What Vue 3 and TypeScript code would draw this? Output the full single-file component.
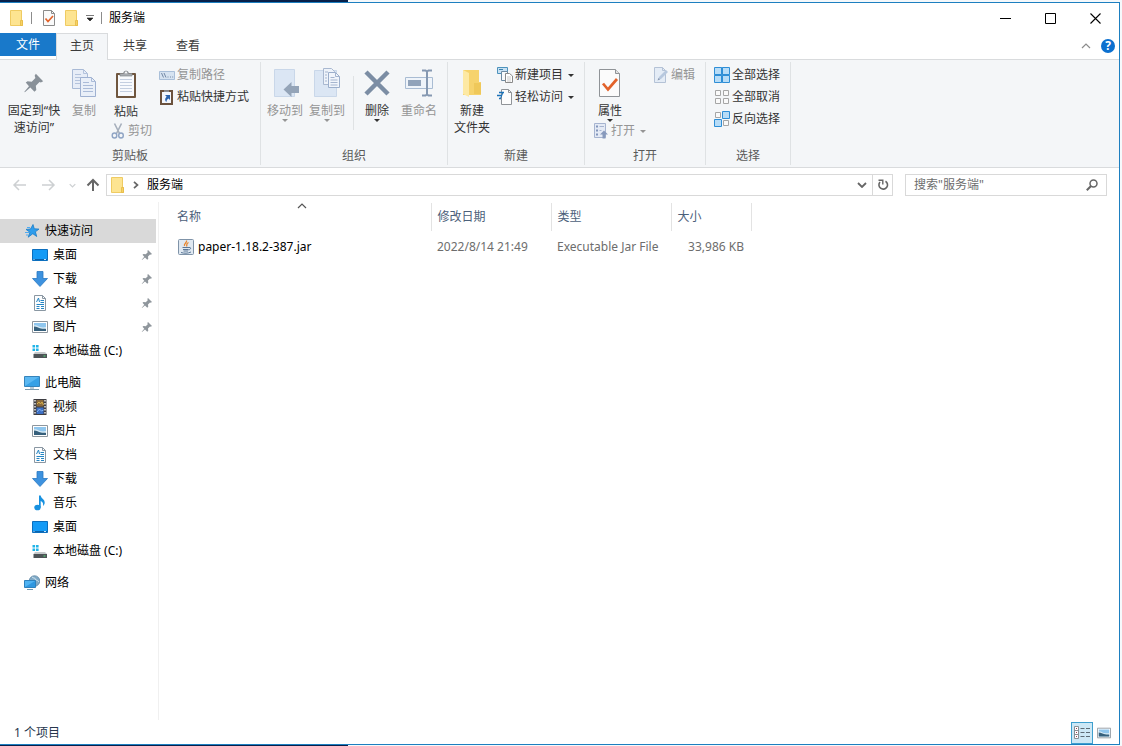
<script setup lang="ts">
import { ref } from 'vue'

interface Place {
  label: string
  icon: string
  root?: boolean
  pinned?: boolean
}

interface FileRow {
  name: string
  modified: string
  type: string
  size: string
}

const groups: Place[][] = [
  [
    { label: '快速访问', icon: 'star', root: true },
    { label: '桌面', icon: 'desktop', pinned: true },
    { label: '下载', icon: 'download', pinned: true },
    { label: '文档', icon: 'document', pinned: true },
    { label: '图片', icon: 'picture', pinned: true },
    { label: '本地磁盘 (C:)', icon: 'drive' },
  ],
  [
    { label: '此电脑', icon: 'computer', root: true },
    { label: '视频', icon: 'video' },
    { label: '图片', icon: 'picture' },
    { label: '文档', icon: 'document' },
    { label: '下载', icon: 'download' },
    { label: '音乐', icon: 'music' },
    { label: '桌面', icon: 'desktop' },
    { label: '本地磁盘 (C:)', icon: 'drive' },
  ],
  [{ label: '网络', icon: 'network', root: true }],
]

const files: FileRow[] = [
  { name: 'paper-1.18.2-387.jar', modified: '2022/8/14 21:49', type: 'Executable Jar File', size: '33,986 KB' },
]

const tabs: string[] = ['主页', '共享', '查看']
const activeTab = ref('主页')
const selected = ref('0-0')
const query = ref('')
</script>

<template>
  <svg class="sprite" aria-hidden="true">
    <symbol id="folder" viewBox="0 0 16 16">
      <path d="M1.500.5h11v10h1v5h-12z" fill="#fde491" stroke="#efcb62" />
      <path d="M11.500 15v-4.500h2V15.500h-2z" fill="#f7d365" stroke="#e5b945" stroke-width=".8" />
    </symbol>
    <symbol id="doc-check" viewBox="0 0 16 16">
      <path d="M2.500.5h8l3 3v12h-11z" fill="#fafafa" stroke="#8b8b8b" />
      <path d="M10.500.5v3h3" fill="none" stroke="#8b8b8b" />
      <path d="M4.500 8.500l2.500 3 5-5.500" fill="none" stroke="#e2622a" stroke-width="1.700" />
    </symbol>
    <symbol id="caret" viewBox="0 0 6 3"><path d="M0 0h6L3 3z" fill="currentColor" /></symbol>
    <symbol id="pin" viewBox="0 0 24 24">
      <path d="M14 2l8 8-2.500 1.500-1.500-.5-4 4 .5 4.500-2 2L8 17l-6 5-.5-.5L6.500 15.500 3 11.500l2-1.500 4.500.5 4-4-.8-2.500z" fill="currentColor" />
    </symbol>
    <symbol id="copy" viewBox="0 0 26 30">
      <path d="M1.500 1.500h11l4 4v15h-15z" fill="#e7edf7" stroke="#a9bad6" />
      <path d="M12.500 1.500v4h4M4 6.500h6M4 9.500h10M4 12.500h6M4 15.500h6" fill="none" stroke="#b4c3dc" />
      <path d="M9.500 9.500h11l4 4v15h-15z" fill="#e9eff8" stroke="#9fb1d1" />
      <path d="M20.500 9.500v4h4M12 14.500h6M12 17.500h10M12 20.500h10M12 23.500h10" fill="none" stroke="#aabbd8" />
    </symbol>
    <symbol id="paste" viewBox="0 0 22 30">
      <rect x="1" y="4" width="20" height="25" rx="1" fill="#6f563f" />
      <rect x="3" y="6" width="16" height="21" fill="#f8fafd" />
      <path d="M5 10.500h12M5 13.500h12M5 16.500h12M5 19.500h12M5 22.500h12" stroke="#c4cfe0" />
      <path d="M5 7V4.500h3.500a2.500 2.500 0 0 1 5 0H17V7z" fill="#a7abb0" stroke="#85898e" stroke-width=".7" />
      <circle cx="11" cy="3.500" r="1" fill="#fff" />
    </symbol>
    <symbol id="cut" viewBox="0 0 16 16">
      <path d="M4.500.5l5 10M11.500.5l-5 10" stroke="#a5aebb" stroke-width="1.600" />
      <ellipse cx="4.500" cy="12.500" rx="2.300" ry="2.500" fill="none" stroke="#8fa4c4" stroke-width="1.400" />
      <ellipse cx="11" cy="12.500" rx="2.300" ry="2.500" fill="none" stroke="#8fa4c4" stroke-width="1.400" />
    </symbol>
    <symbol id="path" viewBox="0 0 16 16">
      <path d="M.5 4.500h15v8H.500z" fill="#d6e3f1" stroke="#a9bfd9" />
      <path d="M2.500 6l2 4.500M5 6l2 4.500" stroke="#7389a6" />
      <path d="M8.500 10h1M11 10h1M13.200 10h1" stroke="#7389a6" />
    </symbol>
    <symbol id="shortcut" viewBox="0 0 16 16">
      <rect x="2" y="2" width="11" height="13" fill="#f3f7fd" stroke="#6b523d" stroke-width="2" />
      <path d="M5 3V1.200h5V3z" fill="#8c9095" />
      <path d="M6 6h5v5L9.500 9.500C8 10.500 7.500 11.500 7.500 13 5.500 11.500 6 9 7.700 7.700z" fill="#2a63ad" />
    </symbol>
    <symbol id="move-to" viewBox="0 0 28 30">
      <path d="M3.500 1.500h20v27h-20z" fill="#dbe6f4" stroke="#c9d7e9" />
      <path d="M12.500 21.500l8-7.500v4h7.500v7h-7.500v4z" fill="#94a4b8" />
    </symbol>
    <symbol id="copy-to" viewBox="0 0 28 30">
      <path d="M1.500 2.500h22v26h-22z" fill="#dbe6f4" stroke="#c9d7e9" />
      <path d="M10.500.5h8l3 3v13h-11z" fill="#eef3fa" stroke="#a9b8d0" />
      <path d="M15.500 4.500h7l4 4v11h-11z" fill="#f1f5fb" stroke="#9baecb" />
      <path d="M22.500 4.500v4h4M17.500 9.500h4M17.500 12h7M17.500 14.500h7M17.500 17h7M12 4h3M12 7h2M12 10h2M12 13h2" fill="none" stroke="#a5b5cf" />
    </symbol>
    <symbol id="delete" viewBox="0 0 28 28">
      <path d="M3 3l22 22M25 3L3 25" stroke="#7b8da4" stroke-width="4.500" />
    </symbol>
    <symbol id="rename" viewBox="0 0 30 28">
      <path d="M1.500 8.500h27v11h-27z" fill="#eff4fa" stroke="#a9bcd3" />
      <path d="M4 11h13v6H4z" fill="#91a3ba" />
      <path d="M18 1.500h3.500l1.500 1 1.500-1H28M18 26.500h3.500l1.500-1 1.500 1H28M23 2.500v23" fill="none" stroke="#8598b1" stroke-width="2" />
    </symbol>
    <symbol id="new-folder" viewBox="0 0 22 30">
      <path d="M2 2h16v12h2v13H2z" fill="#f6d36d" />
      <path d="M2 2l6 3v24l-6-3z" fill="#fde9a4" />
      <path d="M13 15h7v11h-7z" fill="#efc85a" />
    </symbol>
    <symbol id="new-item" viewBox="0 0 16 16">
      <path d="M.5.5h10v6H.500z" fill="#c8e1f3" stroke="#4d93bd" />
      <path d="M2 2.500h4" stroke="#3d83ae" />
      <path d="M4.500 4.500h6v9h-6z" fill="#f8fafc" stroke="#6e8aa2" />
      <path d="M8.500 6.500h4l3 2.500v6.500h-7z" fill="#fff" stroke="#8a8a8a" />
      <path d="M10 10h4M10 12h4M10 14h4" stroke="#bbb" stroke-width=".8" />
    </symbol>
    <symbol id="easy" viewBox="0 0 16 16">
      <path d="M4.500.5h7l3 3v12h-10z" fill="#fdfdfd" stroke="#909498" />
      <path d="M11.500.5v3h3" fill="none" stroke="#909498" />
      <path d="M2 3.500h5M0 6.500h5M2 9.500h2" stroke="#1b72b8" stroke-width="1.400" />
      <path d="M6 3.500L3.500 9.500" stroke="#1b72b8" />
    </symbol>
    <symbol id="properties" viewBox="0 0 24 30">
      <path d="M1.500 1.500h16l4 4v23h-20z" fill="#fbfbfb" stroke="#8f9397" />
      <path d="M17.500 1.500v4h4" fill="#e2e2e2" stroke="#8f9397" />
      <path d="M5 15.500l5 6 9-10.500" fill="none" stroke="#e2622a" stroke-width="2.700" />
    </symbol>
    <symbol id="open" viewBox="0 0 16 16">
      <path d="M1.500.5h11v14h-11z" fill="#e4eaf5" stroke="#a6b4d0" />
      <path d="M3 3.500h2M3 7.500h2M3 11.500h2" stroke="#8295bb" stroke-width="2" />
      <path d="M6.500 3.500H11M6.500 7.500h2" stroke="#a6b4d0" />
      <path d="M11 7.500l4 4h-2.500v4h-3v-4H7z" fill="#8799bc" />
    </symbol>
    <symbol id="edit" viewBox="0 0 16 16">
      <path d="M1.500.5h8l3 3v12h-11z" fill="#e4ecf6" stroke="#b4c2d6" />
      <path d="M9.500.5v3h3" fill="none" stroke="#b4c2d6" />
      <path d="M5 13l1-3L13 3l2 2-7 7z" fill="#b7c8de" />
      <path d="M4.500 13.500l1-2.500 1.500 1.500z" fill="#8999b1" />
    </symbol>
    <symbol id="select-all" viewBox="0 0 16 16">
      <path d="M.5.5h7v7h-7zM8.500.5h7v7h-7zM.5 8.500h7v7h-7zM8.500 8.500h7v7h-7z" fill="#b7dcf7" stroke="#2e8ed6" />
      <path d="M8 0v16M0 8h16" stroke="#2e8ed6" />
    </symbol>
    <symbol id="select-none" viewBox="0 0 16 16">
      <path d="M1.500 1.500h5v5h-5zM9.500 1.500h5v5h-5zM1.500 9.500h5v5h-5zM9.500 9.500h5v5h-5z" fill="#fafafa" stroke="#a6a6a6" />
    </symbol>
    <symbol id="select-invert" viewBox="0 0 16 16">
      <path d="M1.500 1.500h5v5h-5zM9.500 9.500h5v5h-5z" fill="#fafafa" stroke="#a6a6a6" />
      <path d="M8.500.5h7v7h-7zM.5 8.500h7v7h-7z" fill="#b7dcf7" stroke="#2e8ed6" />
    </symbol>
    <symbol id="arrow-left" viewBox="0 0 14 12"><path d="M14 6H2M7 1L2 6l5 5" fill="none" stroke="currentColor" stroke-width="1.500" /></symbol>
    <symbol id="arrow-right" viewBox="0 0 14 12"><path d="M0 6h12M7 1l5 5-5 5" fill="none" stroke="currentColor" stroke-width="1.500" /></symbol>
    <symbol id="arrow-up" viewBox="0 0 14 14"><path d="M7 13V2M1.500 7.500L7 2l5.500 5.500" fill="none" stroke="currentColor" stroke-width="2" /></symbol>
    <symbol id="chevron-down" viewBox="0 0 10 6"><path d="M1 1l4 4 4-4" fill="none" stroke="currentColor" stroke-width="1.800" /></symbol>
    <symbol id="chevron-up" viewBox="0 0 10 6"><path d="M1 5l4-4 4 4" fill="none" stroke="currentColor" stroke-width="1.200" /></symbol>
    <symbol id="chevron-right" viewBox="0 0 6 8"><path d="M1 .8L4.500 4 1 7.200" fill="none" stroke="currentColor" stroke-width="1.700" /></symbol>
    <symbol id="refresh" viewBox="0 0 12 12">
      <path d="M8.500 2.200A4.300 4.300 0 1 1 3 3" fill="none" stroke="currentColor" stroke-width="1.600" />
      <path d="M1.500 1.200h4.300v4.300" fill="none" stroke="currentColor" stroke-width="1.400" />
    </symbol>
    <symbol id="search" viewBox="0 0 12 12">
      <circle cx="7.500" cy="4.500" r="3.500" fill="none" stroke="currentColor" stroke-width="1.500" />
      <path d="M5 7L.8 11.200" stroke="currentColor" stroke-width="2" />
    </symbol>
    <symbol id="star" viewBox="0 0 16 16">
      <path d="M9 1.500l1.300 4.300 4.700.3-3.600 2.700 1.300 4.700-3.900-2.800-4.600 3.500 1.700-5L2 6.400l4.500-.4z" fill="#2f9dec" stroke="#1b7cc7" stroke-width=".8" />
      <path d="M1 9.500h4M2 12h2M3 4.500h3" stroke="#4faaf0" />
    </symbol>
    <symbol id="desktop" viewBox="0 0 16 16">
      <path d="M.5 2.500h15v11H.500z" fill="#159bf6" stroke="#0c6fbe" />
      <path d="M1 12.500h14" stroke="#0b62ab" />
      <path d="M1.500 12.500h1M12 12.500h2" stroke="#bfe3ff" />
    </symbol>
    <symbol id="download" viewBox="0 0 16 16"><path d="M5 .5h6v7h4.500L8 15.500.5 7.500H5z" fill="#3d92df" stroke="#2a78c1" stroke-width=".8" /></symbol>
    <symbol id="document" viewBox="0 0 16 16">
      <path d="M2.500.5h8l3 3v12h-11z" fill="#fcfdfe" stroke="#8a97a2" />
      <path d="M10.500.5v3h3" fill="none" stroke="#8a97a2" />
      <path d="M4.500 7l2-4 1 4M8.500 5.500H12M8.500 7.500H12M4.500 9.500H12M4.500 11.500h3M9 11.500h3M4.500 13.500h3M9 13.500h3" fill="none" stroke="#2585c3" />
    </symbol>
    <symbol id="picture" viewBox="0 0 16 16">
      <path d="M.5 2.500h15v11H.500z" fill="#fff" stroke="#8d969e" />
      <path d="M2 4h12v8H2z" fill="#8fc6ee" />
      <path d="M2 6.500c3-1 4 1 6 1.500s4 .5 6 0V12H2z" fill="#d9ebf5" />
      <path d="M2 7.500c3 0 4 1.500 7 2s4 0 5 .5v2H2z" fill="#36607c" />
    </symbol>
    <symbol id="drive" viewBox="0 0 16 16">
      <path d="M.5 2h2.600v2.600H.500zM4 2h2.600v2.600H4zM.5 5.500h2.600v2.600H.500zM4 5.500h2.600v2.600H4z" fill="#20b4e8" />
      <path d="M3 9h10l2 2H1.500z" fill="#c5c9cb" />
      <path d="M1.500 11H15v4H1.500z" fill="#4d5356" />
      <path d="M11.500 13h2" stroke="#55e07b" />
    </symbol>
    <symbol id="computer" viewBox="0 0 16 16">
      <path d="M.5 1.500h15v10H.500z" fill="#5bb8f2" stroke="#3684bb" />
      <path d="M1 11L15 2v9z" fill="#37a1e6" />
      <path d="M1 14.500h14" stroke="#7f9cae" />
      <path d="M6 12h4v2H6z" fill="#b9cad5" />
    </symbol>
    <symbol id="video" viewBox="0 0 16 16">
      <path d="M1.500 0h13v16h-13z" fill="#3d3d42" />
      <path d="M4.500 1h7v6.500h-7z" fill="#8a6a3d" />
      <path d="M4.500 8.500h7V15h-7z" fill="#3c6fc4" />
      <path d="M5 5l2-2 1.500 2L10 3l1.500 3" fill="none" stroke="#d8b24c" />
      <path d="M5 13l2.500-3 2 2 2-1" fill="none" stroke="#86b5f2" />
      <path d="M3 1v14M13 1v14" stroke="#f2f2f2" stroke-width="1.400" stroke-dasharray="1.500 1.500" />
    </symbol>
    <symbol id="music" viewBox="0 0 16 16">
      <ellipse cx="5.500" cy="12.500" rx="3.200" ry="2.800" fill="#1791e0" />
      <path d="M7 .5h1.700c.3 3 4.300 3.500 4 7.500-.2 1.500-1 2.300-1.700 3 .6-3-.5-4-2.300-5v6.500H7z" fill="#1791e0" />
    </symbol>
    <symbol id="network" viewBox="0 0 16 16">
      <circle cx="10.500" cy="6" r="5.300" fill="#7fa9c6" stroke="#56809f" stroke-width=".7" />
      <path d="M8 2c1 1.500 3 .5 3.500 2S9 6 8 7M12 5c2 0 2 2 3 1.500" fill="none" stroke="#cfe3ef" />
      <path d="M.5 5.500h11v7H.500z" fill="#4fb3f3" stroke="#2d81bd" />
      <path d="M1 12l10-6v6z" fill="#2f97e0" />
      <path d="M3 14.500h6" stroke="#6f98b3" />
    </symbol>
    <symbol id="jar" viewBox="0 0 16 16">
      <rect x=".5" y=".5" width="15" height="15" rx="1" fill="#dfe8f1" stroke="#7f93a8" />
      <path d="M8.500 1.500c1 2-3 3-2 5.500M10.500 3.500c-3 1.500-1 2-2 4" fill="none" stroke="#e8862e" stroke-width="1.300" />
      <path d="M4.500 8.500h6.500M5 10.500h5.500M11 8.500c2.500-.5 2 2-.5 2.500M3 13.500c3 1 7 1 10-.5M5.500 12h4.500" fill="none" stroke="#5a7797" />
    </symbol>
    <symbol id="details" viewBox="0 0 16 14">
      <path d="M.5.5h4v12h-4zM.5 4.500h4M.5 8.500h4" fill="#fff" stroke="#8a8f94" />
      <path d="M2 2.500h1M2 6.500h1M2 10.500h1" stroke="#a33f50" />
      <path d="M6.500 2.500h4M12 2.500h4M6.500 6.500h4M12 6.500h4M6.500 10.500h4M12 10.500h4" stroke="#5d6b75" />
    </symbol>
  </svg>

  <div class="screen">
    <div class="backdrop top"></div>
    <main class="window">
      <header class="titlebar">
        <svg class="i16"><use href="#folder" /></svg>
        <i class="tick first"></i>
        <button class="quick" type="button" aria-label="属性"><svg class="i16"><use href="#doc-check" /></svg></button>
        <button class="quick" type="button" aria-label="新建文件夹"><svg class="i16"><use href="#folder" /></svg></button>
        <button class="quick customize" type="button" aria-label="自定义快速访问工具栏">
          <svg viewBox="0 0 8 6"><path d="M0 .5h8M1 3h6L4 6z" fill="#222" stroke="#222" stroke-width=".6" /></svg>
        </button>
        <i class="tick"></i>
        <h1>服务端</h1>
        <div class="controls">
          <button type="button" aria-label="最小化"><svg viewBox="0 0 11 11"><path d="M0 5.500h11" stroke="#000" /></svg></button>
          <button type="button" aria-label="最大化"><svg viewBox="0 0 11 11"><path d="M.5.5h10v10H.500z" fill="none" stroke="#000" /></svg></button>
          <button type="button" aria-label="关闭"><svg viewBox="0 0 11 11"><path d="M.5.5l10 10M10.500.5l-10 10" stroke="#000" stroke-width="1.100" /></svg></button>
        </div>
      </header>

      <nav class="tabs">
        <button class="file" type="button">文件</button>
        <button v-for="tab in tabs" :key="tab" class="tab" :class="{ active: tab === activeTab }" type="button" @click="activeTab = tab">{{ tab }}</button>
        <div class="tab-tools">
          <button type="button" class="fold" aria-label="最小化功能区"><svg><use href="#chevron-up" /></svg></button>
          <button type="button" class="help" aria-label="帮助">?</button>
        </div>
      </nav>

      <section class="ribbon">
        <div class="group clipboard">
          <div class="tools">
            <button class="big wide" type="button"><span class="pic pin"><svg><use href="#pin" /></svg></span>固定到“快<br>速访问”</button>
            <button class="big narrow" type="button" disabled><span class="pic"><svg width="26" height="30"><use href="#copy" /></svg></span>复制</button>
            <div class="stack">
              <button class="big narrow" type="button"><span class="pic"><svg width="22" height="30"><use href="#paste" /></svg></span>粘贴</button>
              <button class="small" type="button" disabled><svg class="i16"><use href="#cut" /></svg>剪切</button>
            </div>
            <div class="list">
              <button class="small" type="button" disabled><svg class="i16"><use href="#path" /></svg>复制路径</button>
              <button class="small" type="button"><svg class="i16"><use href="#shortcut" /></svg>粘贴快捷方式</button>
            </div>
          </div>
          <h2>剪贴板</h2>
        </div>

        <div class="group organize">
          <div class="tools">
            <button class="big" type="button" disabled><span class="pic"><svg width="28" height="30"><use href="#move-to" /></svg></span>移动到<svg class="caret"><use href="#caret" /></svg></button>
            <button class="big" type="button" disabled><span class="pic"><svg width="28" height="30"><use href="#copy-to" /></svg></span>复制到<svg class="caret"><use href="#caret" /></svg></button>
            <i class="rule"></i>
            <button class="big" type="button"><span class="pic"><svg width="28" height="28"><use href="#delete" /></svg></span>删除<svg class="caret"><use href="#caret" /></svg></button>
            <button class="big" type="button" disabled><span class="pic"><svg width="30" height="28"><use href="#rename" /></svg></span>重命名</button>
          </div>
          <h2>组织</h2>
        </div>

        <div class="group create">
          <div class="tools">
            <button class="big" type="button"><span class="pic"><svg width="22" height="30"><use href="#new-folder" /></svg></span>新建<br>文件夹</button>
            <div class="list">
              <button class="small" type="button"><svg class="i16"><use href="#new-item" /></svg>新建项目<svg class="caret"><use href="#caret" /></svg></button>
              <button class="small" type="button"><svg class="i16"><use href="#easy" /></svg>轻松访问<svg class="caret"><use href="#caret" /></svg></button>
            </div>
          </div>
          <h2>新建</h2>
        </div>

        <div class="group open">
          <div class="tools">
            <div class="stack">
              <button class="big narrow" type="button"><span class="pic"><svg width="24" height="30"><use href="#properties" /></svg></span>属性<svg class="caret"><use href="#caret" /></svg></button>
              <button class="small" type="button" disabled><svg class="i16"><use href="#open" /></svg>打开<svg class="caret"><use href="#caret" /></svg></button>
            </div>
            <div class="list">
              <button class="small" type="button" disabled><svg class="i16"><use href="#edit" /></svg>编辑</button>
            </div>
          </div>
          <h2>打开</h2>
        </div>

        <div class="group select">
          <div class="tools">
            <div class="list">
              <button class="small" type="button"><svg class="i16"><use href="#select-all" /></svg>全部选择</button>
              <button class="small" type="button"><svg class="i16"><use href="#select-none" /></svg>全部取消</button>
              <button class="small" type="button"><svg class="i16"><use href="#select-invert" /></svg>反向选择</button>
            </div>
          </div>
          <h2>选择</h2>
        </div>
      </section>

      <section class="location">
        <div class="history">
          <button type="button" disabled aria-label="返回"><svg width="14" height="12"><use href="#arrow-left" /></svg></button>
          <button type="button" disabled aria-label="前进"><svg width="14" height="12"><use href="#arrow-right" /></svg></button>
          <button class="recent" type="button" disabled aria-label="最近浏览的位置"><svg width="7" height="5"><use href="#chevron-down" /></svg></button>
          <button class="up" type="button" aria-label="上移"><svg width="14" height="14"><use href="#arrow-up" /></svg></button>
        </div>
        <div class="address">
          <svg class="i16"><use href="#folder" /></svg>
          <svg class="crumb-arrow"><use href="#chevron-right" /></svg>
          <a href="#">服务端</a>
          <button class="drop" type="button" aria-label="上一个位置"><svg width="10" height="6"><use href="#chevron-down" /></svg></button>
          <button class="refresh" type="button" aria-label="刷新"><svg width="12" height="12"><use href="#refresh" /></svg></button>
        </div>
        <label class="search">
          <input v-model="query" type="text" placeholder='搜索"服务端"' aria-label="搜索">
          <svg width="12" height="12"><use href="#search" /></svg>
        </label>
      </section>

      <div class="body">
        <nav class="tree">
          <ul v-for="(group, g) in groups" :key="g">
            <li v-for="(place, p) in group" :key="p">
              <button type="button" :class="{ root: place.root, selected: selected === `${g}-${p}` }" @click="selected = `${g}-${p}`">
                <svg class="i16"><use :href="`#${place.icon}`" /></svg>
                <span>{{ place.label }}</span>
                <svg v-if="place.pinned" class="pinned"><use href="#pin" /></svg>
              </button>
            </li>
          </ul>
        </nav>
        <section class="content">
          <table>
            <colgroup><col class="c-name"><col class="c-date"><col class="c-type"><col class="c-size"></colgroup>
            <thead>
              <tr>
                <th class="sorted">名称<svg><use href="#chevron-up" /></svg></th>
                <th>修改日期</th>
                <th>类型</th>
                <th>大小</th>
              </tr>
            </thead>
            <tbody>
              <tr v-for="file in files" :key="file.name">
                <td class="name"><div><svg class="i16"><use href="#jar" /></svg>{{ file.name }}</div></td>
                <td>{{ file.modified }}</td>
                <td>{{ file.type }}</td>
                <td class="size">{{ file.size }}</td>
              </tr>
            </tbody>
          </table>
        </section>
      </div>

      <footer class="status">
        <span>1 个项目</span>
        <div class="views">
          <button class="on" type="button" aria-label="详细信息"><svg width="16" height="14"><use href="#details" /></svg></button>
          <button type="button" aria-label="大图标"><svg width="14" height="14"><use href="#picture" /></svg></button>
        </div>
      </footer>
    </main>
    <div class="backdrop bottom"></div>
  </div>
</template>

<style>
body {
  margin: 0;
}
</style>

<style scoped>
* {
  box-sizing: border-box;
}
.screen {
  display: flex;
  flex-direction: column;
  min-height: 100vh;
  background: #f6fafc;
  color: #111;
  font: 12px/16px "Noto Sans", "Noto Sans CJK SC", sans-serif;
}
.sprite {
  position: absolute;
  width: 0;
  height: 0;
}
svg {
  display: block;
  flex: none;
}
button {
  margin: 0;
  padding: 0;
  border: 0;
  background: none;
  color: inherit;
  font: inherit;
}
h1,
h2 {
  margin: 0;
  font: inherit;
}
ul {
  margin: 0;
  padding: 0;
  list-style: none;
}
.i16 {
  width: 16px;
  height: 16px;
}
.caret {
  width: 6px;
  height: 3px;
}
.backdrop {
  flex: none;
  background: linear-gradient(90deg, #08204a 31%, #f4f8fb 31%);
}
.top {
  height: 2px;
}
.bottom {
  height: 1px;
}
.window {
  display: flex;
  flex: 1;
  flex-direction: column;
  margin-right: 2px;
  border: 1px solid #1d7fc0;
  border-left: 0;
  background: #fff;
}

/* title bar */
.titlebar {
  display: flex;
  align-items: center;
  height: 30px;
  padding-left: 9px;
}
.tick {
  width: 1px;
  height: 12px;
  background: #8c8c8c;
}
.tick.first {
  margin: 0 9px 0 6px;
}
.quick {
  margin-right: 7px;
}
.customize {
  margin: 0 7px 0 -1px;
}
.titlebar .customize svg {
  width: 8px;
  height: 6px;
}
.titlebar h1 {
  margin-left: 7px;
  color: #000;
}
.controls {
  display: flex;
  align-self: stretch;
  margin-left: auto;
  padding-right: 1px;
}
.controls button {
  display: grid;
  width: 45px;
  place-items: center;
}
.controls svg {
  width: 11px;
  height: 11px;
}

/* tabs */
.tabs {
  display: flex;
  height: 27px;
  border-bottom: 1px solid #d9dbdd;
}
.file {
  width: 56px;
  height: 23px;
  padding-top: 1px;
  background: #1979ca;
  color: #fff;
}
.tab {
  height: 27px;
  margin-right: 1px;
  padding: 0 13px 2px;
  border: 1px solid transparent;
  border-bottom: 0;
  color: #3b3b3b;
}
.tab.active {
  border-color: #d9dbdd;
  background: #f4f6f8;
}
.tab-tools {
  display: flex;
  align-items: center;
  gap: 10px;
  margin-left: auto;
  padding-right: 4px;
}
.fold {
  color: #8c8c8c;
}
.fold svg {
  width: 10px;
  height: 6px;
}
.help {
  width: 14px;
  height: 14px;
  border-radius: 50%;
  background: #0c70cf;
  color: #fff;
  font-weight: 700;
  line-height: 14px;
}

/* ribbon */
.ribbon {
  display: flex;
  height: 108px;
  padding: 2px 0;
  border-bottom: 1px solid #d9dbdd;
  background: #f4f6f8;
  color: #333;
}
.group {
  display: flex;
  flex-direction: column;
  justify-content: space-between;
  border-right: 1px solid #dfe2e4;
}
.group h2 {
  color: #5a5a5a;
  line-height: 18px;
  text-align: center;
}
.tools {
  display: flex;
  align-items: flex-start;
  padding-top: 2px;
}
.clipboard .tools {
  padding-left: 4px;
  padding-right: 11px;
}
.organize .tools {
  padding-left: 3px;
  padding-right: 7px;
}
.create .tools {
  padding-left: 3px;
  padding-right: 10px;
}
.open .tools {
  padding-left: 3px;
  padding-right: 10px;
}
.select .tools {
  padding-left: 8px;
  padding-right: 10px;
}
.big {
  display: block;
  width: 42px;
  line-height: 17px;
  text-align: center;
  white-space: nowrap;
}
.big.wide {
  width: 60px;
}
.big.narrow {
  width: 40px;
}
.big .caret {
  margin: 0 auto;
}
button:disabled {
  color: #959595;
}
.pic {
  display: grid;
  height: 38px;
  place-items: center;
}
.pin {
  color: #899199;
}
.pin svg {
  width: 22px;
  height: 22px;
}
.stack {
  display: flex;
  flex-direction: column;
  margin-left: 2px;
}
.stack .big {
  height: 56px;
}
.stack .small {
  padding-left: 4px;
}
.open .stack .small {
  padding-left: 3px;
}
.list {
  margin-left: 7px;
}
.create .list {
  margin-left: 4px;
}
.select .list {
  margin-left: 0;
}
.small {
  display: flex;
  align-items: center;
  gap: 2px;
  height: 22px;
  white-space: nowrap;
}
.small .caret {
  margin-left: 3px;
}
.rule {
  width: 1px;
  height: 54px;
  margin: 12px 2px 0 5px;
  background: #dfe2e4;
}

/* address row */
.location {
  display: flex;
  align-items: center;
  height: 34px;
  padding-right: 12px;
}
.history {
  display: flex;
  align-items: center;
  width: 106px;
  padding-left: 12px;
  gap: 16px;
}
.history button:disabled {
  color: #cdd0d2;
}
.history .recent {
  margin-left: -3px;
}
.history .up {
  margin-left: -6px;
  color: #666;
}
.address {
  display: flex;
  flex: 1;
  align-items: center;
  height: 22px;
  border: 1px solid #d9d9d9;
  padding-left: 3px;
}
.crumb-arrow {
  width: 6px;
  height: 8px;
  margin: 0 8px 0 7px;
  color: #666;
}
.address a {
  flex: 1;
  color: #000;
  text-decoration: none;
}
.drop,
.refresh {
  display: grid;
  align-self: stretch;
  width: 20px;
  place-items: center;
  color: #666;
}
.refresh {
  border-left: 1px solid #d9d9d9;
}
.search {
  display: flex;
  align-items: center;
  width: 202px;
  height: 22px;
  margin-left: 12px;
  padding: 0 8px;
  border: 1px solid #d9d9d9;
  color: #666;
}
.search input {
  flex: 1;
  min-width: 0;
  padding: 0;
  border: 0;
  outline: 0;
  background: none;
  color: #000;
  font: inherit;
}
.search input::placeholder {
  color: #6d6d6d;
}

/* body */
.body {
  display: flex;
  flex: 1;
}
.tree {
  width: 159px;
  padding: 17px 2px 0 0;
  border-right: 1px solid #f0f0f0;
}
.tree ul {
  margin-bottom: 8px;
}
.tree button {
  display: flex;
  align-items: center;
  gap: 5px;
  width: 100%;
  height: 24px;
  padding: 0 3px 0 32px;
  color: #000;
  text-align: left;
}
.tree .root {
  padding-left: 24px;
}
.tree .selected {
  background: #d9d9d9;
}
.tree span {
  flex: 1;
  white-space: nowrap;
}
.pinned {
  width: 12px;
  height: 12px;
  color: #8f969c;
}
.content {
  flex: 1;
  padding-top: 1px;
}
table {
  table-layout: fixed;
  width: 592px;
  border-collapse: collapse;
}
.c-name {
  width: 272px;
}
.c-date,
.c-type {
  width: 120px;
}
.c-size {
  width: 80px;
}
th {
  position: relative;
  height: 28px;
  padding: 0 6px;
  border-right: 1px solid #e3e3e3;
  color: #4c607a;
  font-weight: 400;
  text-align: left;
}
th.sorted {
  padding-left: 18px;
}
th svg {
  position: absolute;
  top: 0;
  left: 51%;
  width: 10px;
  height: 6px;
  color: #555;
}
td {
  height: 31px;
  padding: 0 6px;
  color: #6d6d6d;
  white-space: nowrap;
}
td.name {
  padding-left: 19px;
  color: #000;
}
.name div {
  display: flex;
  align-items: center;
  gap: 4px;
}
td.size {
  padding-right: 7px;
  text-align: right;
}

/* status bar */
.status {
  display: flex;
  align-items: center;
  justify-content: space-between;
  height: 24px;
  padding: 1px 4px 0 14px;
  color: #26364d;
}
.views {
  display: flex;
}
.views button {
  display: grid;
  width: 22px;
  height: 22px;
  place-items: center;
}
.views .on {
  border: 1px solid #3e9fce;
  background: #cde8f6;
}
</style>
